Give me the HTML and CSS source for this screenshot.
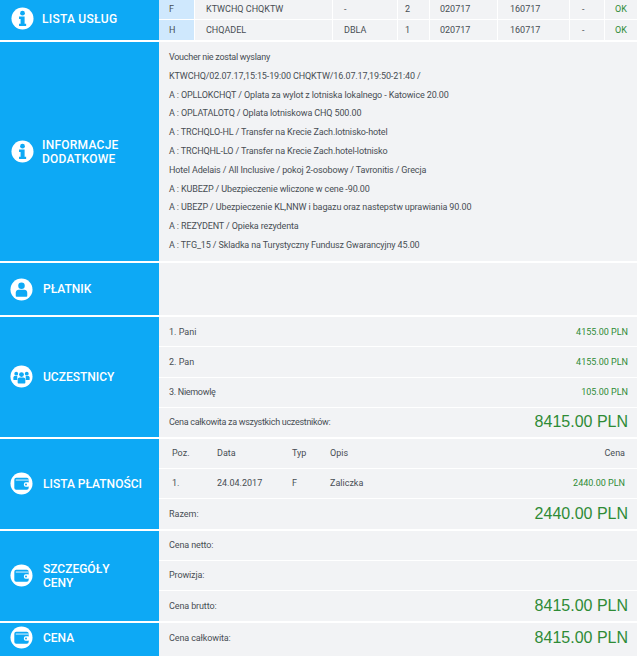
FILE: index.html
```html
<!DOCTYPE html>
<html lang="pl">
<head>
  <meta charset="UTF-8" />
  <title>Rezerwacja</title>
  <link rel="stylesheet" href="styles.css">
</head>
<body>
  <svg class="defs" width="0" height="0" aria-hidden="true">
    <symbol id="i-info" viewBox="0 0 24 24">
      <circle cx="12" cy="12" r="11.5" fill="#fff"/>
      <circle cx="12" cy="6.4" r="2.5" fill="#0da9f5"/>
      <path d="M8.4 10h5.8v7.4h1.6v2.4H8.4v-2.4H10v-5H8.4z" fill="#0da9f5"/>
    </symbol>
    <symbol id="i-user" viewBox="0 0 24 24">
      <circle cx="12" cy="12" r="11.5" fill="#fff"/>
      <circle cx="12" cy="8.2" r="3.4" fill="#0da9f5"/>
      <path d="M6 18.5v-3.2c0-1.8 1.4-3 3-3h6c1.6 0 3 1.200 3 3v3.200c0 .6-.5 1-1 1H7c-.5 0-1-.4-1-1z" fill="#0da9f5"/>
    </symbol>
    <symbol id="i-users" viewBox="0 0 24 24">
      <circle cx="12" cy="12" r="11.500" fill="#fff"/>
      <circle cx="6.500" cy="9" r="2" fill="#0da9f5"/>
      <circle cx="17.500" cy="9" r="2" fill="#0da9f5"/>
      <path d="M3.500 15v-2c0-1 .8-1.600 1.600-1.600h2.500v4.300H4.200c-.4 0-.7-.3-.7-.7zM20.500 15v-2c0-1-.8-1.600-1.600-1.600h-2.500v4.300h3.400c.4 0 .7-.3.7-.7z" fill="#0da9f5"/>
      <circle cx="12" cy="10" r="2.500" fill="#0da9f5"/>
      <path d="M8 18.500v-3.500c0-1.200 1-2 2-2h4c1 0 2 .8 2 2v3.500c0 .4-.3.700-.7.700H8.700c-.4 0-.7-.3-.7-.7z" fill="#0da9f5"/>
    </symbol>
    <symbol id="i-wallet" viewBox="0 0 24 24">
      <circle cx="12" cy="12" r="11.500" fill="#fff"/>
      <rect x="4.500" y="6" width="15" height="12.500" rx="2" fill="#0da9f5"/>
      <path d="M6 8.400h13.500" stroke="#fff" stroke-width=".9"/>
      <rect x="14.500" y="10.800" width="6" height="4.600" rx="1.800" fill="#fff"/>
      <circle cx="16.700" cy="13.100" r="1" fill="#0da9f5"/>
    </symbol>
  </svg>

  <!-- Lista uslug -->
  <section class="block">
    <h2 class="side side-top">
      <svg class="ico"><use href="#i-info"/></svg>
      <span>LISTA USŁUG</span>
    </h2>
    <div class="body services">
      <div class="svc-row">
        <span class="svc-type">F</span><span class="svc-name">KTWCHQ CHQKTW</span><span class="svc-name">-</span><span class="svc-qty">2</span><span>020717</span><span class="svc-wide">160717</span><span class="svc-wide">-</span><span class="ok">OK</span>
      </div>
      <div class="svc-row">
        <span class="svc-type">H</span><span class="svc-name">CHQADEL</span><span class="svc-name">DBLA</span><span class="svc-qty">1</span><span>020717</span><span class="svc-wide">160717</span><span class="svc-wide">-</span><span class="ok">OK</span>
      </div>
    </div>
  </section>

  <!-- Informacje dodatkowe -->
  <section class="block">
    <h2 class="side side-top-info">
      <svg class="ico"><use href="#i-info"/></svg>
      <span>INFORMACJE<br>DODATKOWE</span>
    </h2>
    <div class="body notes">
      <p class="tight">Voucher nie zostal wyslany</p>
      <p>KTWCHQ/02.07.17,15:15-19:00 CHQKTW/16.07.17,19:50-21:40 /</p>
      <p>A : OPLLOKCHQT / Oplata za wylot z lotniska lokalnego - Katowice 20.00</p>
      <p>A : OPLATALOTQ / Oplata lotniskowa CHQ 500.00</p>
      <p>A : TRCHQLO-HL / Transfer na Krecie Zach.lotnisko-hotel</p>
      <p>A : TRCHQHL-LO / Transfer na Krecie Zach.hotel-lotnisko</p>
      <p>Hotel Adelais / All Inclusive / pokoj 2-osobowy / Tavronitis / Grecja</p>
      <p>A : KUBEZP / Ubezpieczenie wliczone w cene -90.00</p>
      <p>A : UBEZP / Ubezpieczenie KL,NNW i bagazu oraz nastepstw uprawiania 90.00</p>
      <p>A : REZYDENT / Opieka rezydenta</p>
      <p>A : TFG_15 / Skladka na Turystyczny Fundusz Gwarancyjny 45.00</p>
    </div>
  </section>

  <!-- Platnik -->
  <section class="block block-payer">
    <h2 class="side">
      <svg class="ico"><use href="#i-user"/></svg>
      <span>PŁATNIK</span>
    </h2>
    <div class="body"></div>
  </section>

  <!-- Uczestnicy -->
  <section class="block">
    <h2 class="side">
      <svg class="ico"><use href="#i-users"/></svg>
      <span>UCZESTNICY</span>
    </h2>
    <div class="body rows rows-four">
      <div class="row"><span>1. Pani</span><span class="price">4155.00 PLN</span></div>
      <div class="row"><span>2. Pan</span><span class="price">4155.00 PLN</span></div>
      <div class="row"><span class="tight">3. Niemowlę</span><span class="price">105.00 PLN</span></div>
      <div class="row"><span class="tight">Cena całkowita za wszystkich uczestników:</span><span class="total">8415.00 PLN</span></div>
    </div>
  </section>

  <!-- Lista platnosci -->
  <section class="block">
    <h2 class="side">
      <svg class="ico"><use href="#i-wallet"/></svg>
      <span>LISTA PŁATNOŚCI</span>
    </h2>
    <div class="body rows">
      <div class="row pay-row"><span>Poz.</span><span>Data</span><span>Typ</span><span>Opis</span><span class="pay-amount">Cena</span></div>
      <div class="row pay-row"><span>1.</span><span>24.04.2017</span><span>F</span><span>Zaliczka</span><span class="pay-amount price">2440.00 PLN</span></div>
      <div class="row"><span>Razem:</span><span class="total">2440.00 PLN</span></div>
    </div>
  </section>

  <!-- Szczegoly ceny -->
  <section class="block">
    <h2 class="side">
      <svg class="ico"><use href="#i-wallet"/></svg>
      <span>SZCZEGÓŁY<br>CENY</span>
    </h2>
    <div class="body rows">
      <div class="row"><span class="snug">Cena netto:</span></div>
      <div class="row"><span class="snug">Prowizja:</span></div>
      <div class="row"><span class="snug">Cena brutto:</span><span class="total">8415.00 PLN</span></div>
    </div>
  </section>

  <!-- Cena -->
  <section class="block block-last">
    <h2 class="side side-last">
      <svg class="ico"><use href="#i-wallet"/></svg>
      <span>CENA</span>
    </h2>
    <div class="body rows">
      <div class="row row-last"><span class="snug">Cena całkowita:</span><span class="total">8415.00 PLN</span></div>
    </div>
  </section>
</body>
</html>
```

FILE: styles.css
```css
:root {
  --blue: #0da9f5;
  --panel: #f2f3f5;
  --type: #cfe8fd;
  --text: #484e54;
  --green: #2e8b36;
}
* { box-sizing: border-box; margin: 0; padding: 0; }

html, body { height: 656px; overflow: hidden; }

body {
  font-family: Roboto, "Liberation Sans", Arial, sans-serif;
  font-size: 9px;
  color: var(--text);
  background: #ffffff;
}
.defs { position: absolute; }
.tight { letter-spacing: -0.3px; }
.snug { letter-spacing: -0.12px; }

/* ===== BLOCKS ===== */
.block {
  display: grid;
  grid-template-columns: 159px 1fr;
  margin-bottom: 2px;
}
.block-payer { height: 52px; }
.block-last { margin-bottom: 0; height: 33px; }

.side {
  display: flex;
  align-items: center;
  gap: 10px;
  padding-left: 10px;
  background: var(--blue);
  color: #ffffff;
  font-size: 12px;
  font-weight: 500;
  line-height: 14px;
}
.side-top, .side-top-info {
  padding-left: 11px;
  gap: 8px;
  letter-spacing: 0.25px;
}
.side-top { padding-bottom: 3px; }
.side-last { padding-bottom: 3px; }
.ico { width: 23px; height: 23px; flex-shrink: 0; }

.body { background: var(--panel); }

/* ===== SERVICES ===== */
.services { height: 40px; }
.svc-row {
  display: grid;
  grid-template-columns: 36px 138px 65px 32px 68px 72px 35px 32px;
  height: 20px;
  border-bottom: 1px solid #ffffff;
  line-height: 18px;
}
.svc-row:last-child { border-bottom: none; line-height: 20px; }
.svc-row span { padding-left: 10px; border-right: 1px solid #ffffff; }
.svc-row span:last-child { border-right: none; }
.svc-row .svc-type { background: var(--type); }
.svc-row .svc-name { padding-left: 11px; }
.svc-row .svc-qty { padding-left: 7px; }
.svc-row .svc-wide { padding-left: 12px; }
.ok { color: var(--green); }

/* ===== NOTES ===== */
.notes { padding: 6px 10px 7px; height: 219px; letter-spacing: -0.13px; }
.notes p { line-height: 18.8px; }
.notes p.tight { letter-spacing: -0.27px; }

/* ===== ROWS ===== */
.rows { display: flex; flex-direction: column; }
.row {
  display: flex;
  justify-content: space-between;
  align-items: center;
  height: 30px;
  padding: 0 9px 0 10px;
  border-bottom: 1px solid #ffffff;
}
.row:last-child { border-bottom: none; }
.rows-four .row { height: 30.33px; }
.rows-four .row:last-child { height: 29px; }
.row-last { height: 33px; padding-bottom: 3px; }
.price { color: var(--green); }
.total {
  color: var(--green);
  font-family: "Liberation Sans", Arial, sans-serif;
  font-size: 16px;
}
.pay-row {
  display: grid;
  grid-template-columns: 45px 75px 38px 1fr auto;
  padding-left: 13px;
  padding-right: 12px;
}
```
